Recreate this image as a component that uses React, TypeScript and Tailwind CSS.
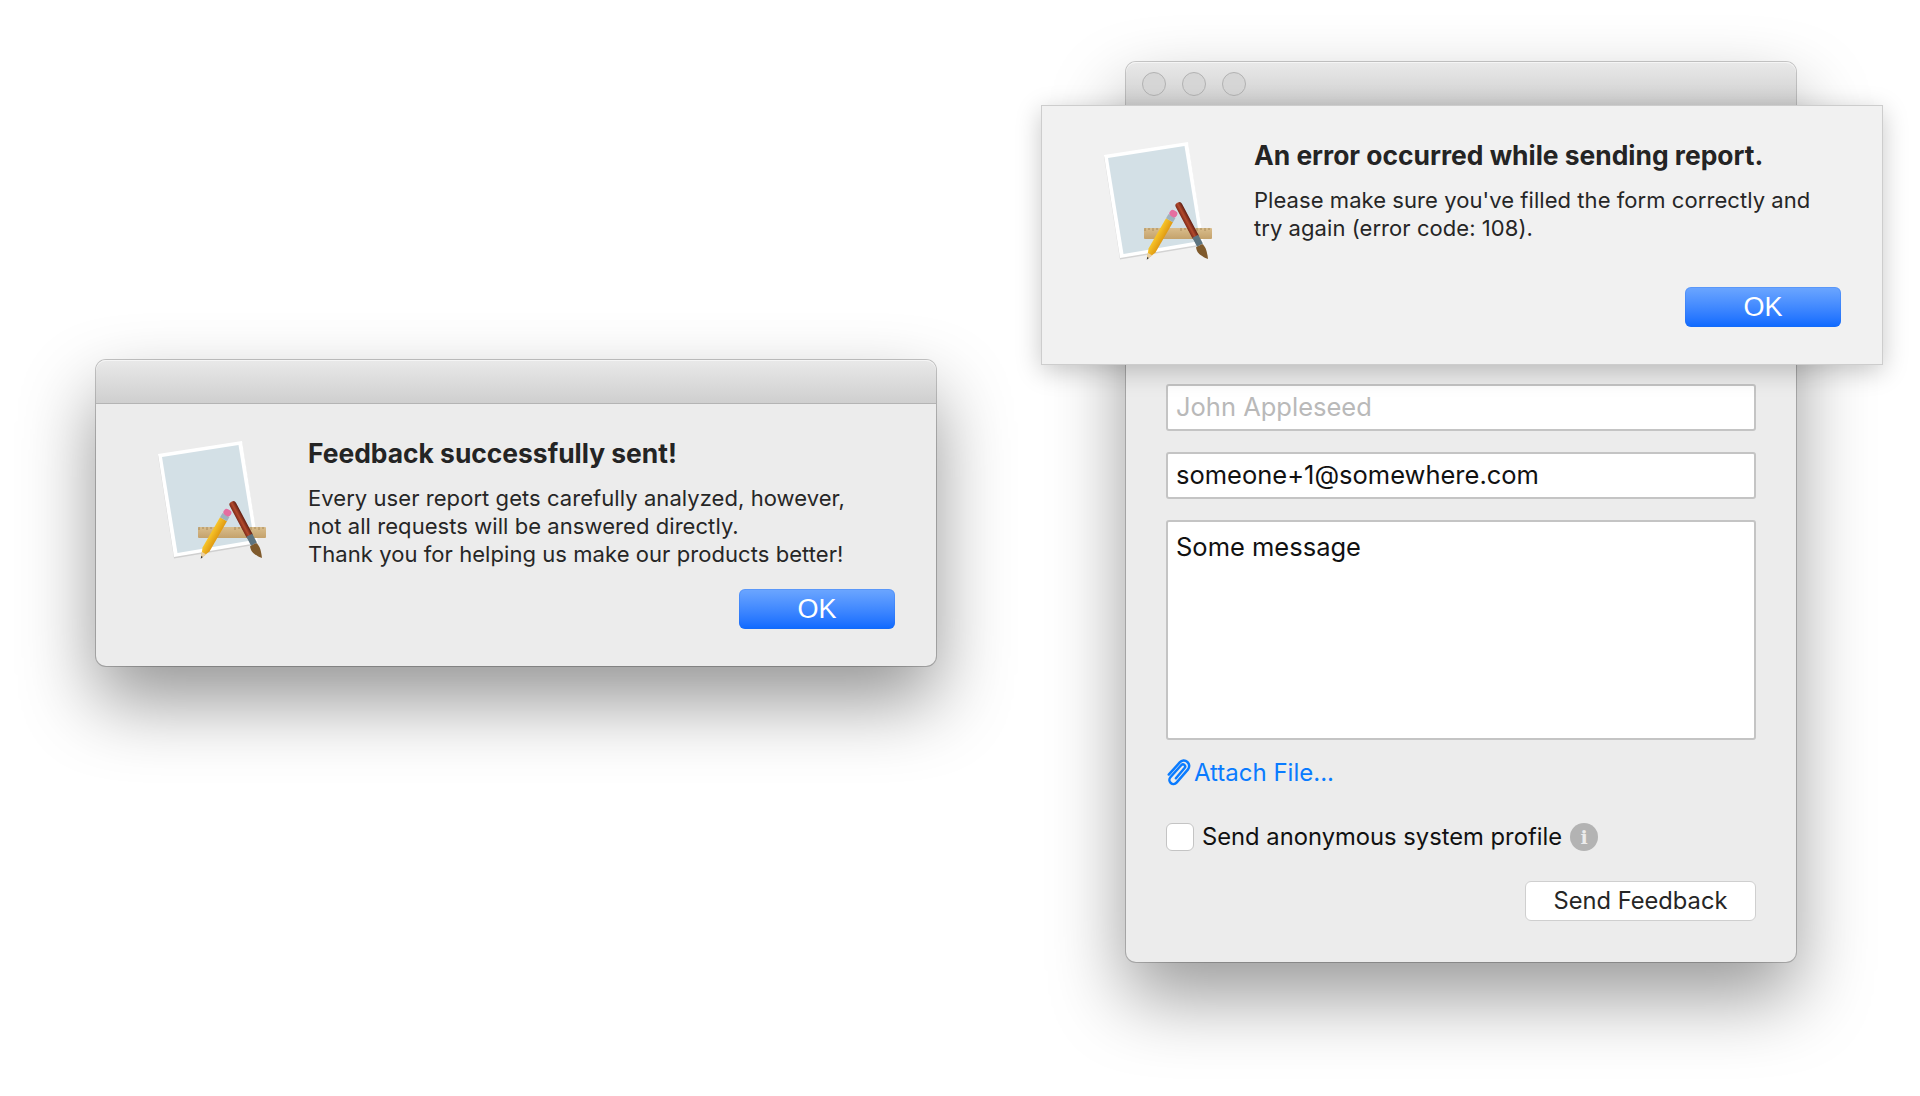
import React from "react";

const AppIcon = () => (
  <svg width="130" height="140" viewBox="0 0 130 140" className="block">
    <defs>
      <linearGradient id="okRuler" x1="0" y1="0" x2="0" y2="1">
        <stop offset="0" stopColor="#d9bd8c" />
        <stop offset="1" stopColor="#c4a26c" />
      </linearGradient>
      <linearGradient id="brushHandle" x1="0" y1="0" x2="1" y2="0">
        <stop offset="0" stopColor="#7c2a1a" />
        <stop offset="0.45" stopColor="#b34a2c" />
        <stop offset="1" stopColor="#5f1d12" />
      </linearGradient>
      <linearGradient id="pencilBody" x1="0" y1="0" x2="1" y2="0">
        <stop offset="0" stopColor="#f7c52a" />
        <stop offset="1" stopColor="#e09a12" />
      </linearGradient>
    </defs>
    <polygon points="8,24 92,11 108,113 24,127" fill="#000" opacity="0.12" transform="translate(0 1.5)" />
    <polygon points="8,24 92,11 108,113 24,127" fill="#ffffff" />
    <polygon points="12,27 88.5,15 104,110 27.5,123" fill="#d3e0e6" />
    <rect x="48" y="97" width="68" height="11" rx="1" fill="url(#okRuler)" />
    <path d="M49 97v3M53 97v2M57 97v3M61 97v2M65 97v3M69 97v2M85 97v3M89 97v2M93 97v3M97 97v2M101 97v3M105 97v2M109 97v3M113 97v2" stroke="#9c7d4e" strokeWidth="0.8" />
    <g transform="translate(-2 2.5) rotate(30 65 105)">
      <path d="M61 84h8v35l-4 10-4-10z" fill="url(#pencilBody)" />
      <path d="M62.3 123h5.4l-2.7 6z" fill="#e8cfa5" />
      <path d="M64 127h2l-1 2.5z" fill="#333" />
      <rect x="61" y="79" width="8" height="5" fill="#9fb2bd" />
      <rect x="61" y="73" width="8" height="6.5" rx="3" fill="#e56ea0" />
    </g>
    <g transform="translate(-1 -2) rotate(-28 97 100)">
      <rect x="93" y="70" width="7" height="41" rx="3" fill="url(#brushHandle)" />
      <rect x="93.2" y="108" width="6.6" height="10" fill="#5d7480" />
      <path d="M92 118c-2 5 0 9 1.5 11 .8 2 2.5 4 3.5 5 .8-1.5 3-8 3-11 0-2-.5-4-1-5z" fill="#7f5a2c" />
    </g>
  </svg>
);

const OkButton = () => (
  <button className="h-10 w-[156px] rounded-md bg-gradient-to-b from-[#6ca6ff] to-[#0a69ff] font-['Liberation_Sans',sans-serif] text-[27px] leading-10 text-white shadow-[inset_0_0_0_1px_rgba(40,110,230,0.25)]">
    OK
  </button>
);

const TitleBar = ({ children }: { children?: React.ReactNode }) => (
  <div className="flex h-11 items-center gap-4 rounded-t-[10px] border-b border-[#b4b4b4] bg-gradient-to-b from-[#e9e9e9] to-[#cfcfcf] pl-4 shadow-[inset_0_1px_0_#f5f5f5]">
    {children}
  </div>
);

const Light = () => (
  <span className="h-6 w-6 rounded-full border border-[#b2b2b2] bg-[#d6d6d6]" />
);

const Field = ({ text, muted }: { text: string; muted?: boolean }) => (
  <div
    className={`flex h-[47px] items-center rounded-[3px] border-2 border-[#c4c4c4] bg-white pl-2 text-[25.5px] ${
      muted ? "text-[#b9b9b9]" : "text-[#111111]"
    }`}
  >
    {text}
  </div>
);

const PaperClip = () => (
  <svg width="25" height="28" viewBox="0 0 24 27" fill="none" stroke="#0a7bff" strokeWidth="2.4" strokeLinecap="round" strokeLinejoin="round">
    <path d="M9.5 18.5 18 8.5a2.1 2.1 0 0 0-3.2-2.7L4.2 17.6a3.9 3.9 0 0 0 5.9 5.2L21 10.2a5.2 5.2 0 0 0-7.8-6.9L2.6 15" />
  </svg>
);

const InfoBadge = () => (
  <span className="flex h-7 w-7 items-center justify-center rounded-full bg-[#b3b3b3] font-['DejaVu_Serif',serif] text-[19px] font-bold leading-none text-[#ececec]">
    i
  </span>
);

export default function App() {
  return (
    <div className="relative h-[1096px] w-[1920px] overflow-hidden bg-white font-['Inter',sans-serif]">
      {/* success dialog */}
      <div className="absolute left-[96px] top-[360px] flex h-[306px] w-[840px] flex-col rounded-[10px] bg-[#ececec] shadow-[0_0_0_1px_rgba(0,0,0,0.22),0_35px_75px_0_rgba(0,0,0,0.42)]">
        <TitleBar />
        <div className="flex flex-1 pl-[54px]">
          <div className="w-[158px] pt-[26px]">
            <AppIcon />
          </div>
          <div className="flex-1 pr-[41px] pt-[33px]">
            <h2 className="text-[26.4px] font-bold leading-8 text-[#242424]">Feedback successfully sent!</h2>
            <p className="mt-[15px] whitespace-pre-line text-[22px] leading-7 tracking-[0.06px] text-[#262626]">
              {"Every user report gets carefully analyzed, however,\nnot all requests will be answered directly.\nThank you for helping us make our products better!"}
            </p>
            <div className="mt-[21px] flex justify-end">
              <OkButton />
            </div>
          </div>
        </div>
      </div>

      {/* feedback form window */}
      <div className="absolute left-[1126px] top-[62px] flex h-[900px] w-[670px] flex-col rounded-[10px] bg-[#ececec] shadow-[0_0_0_1px_rgba(0,0,0,0.2),0_35px_75px_0_rgba(0,0,0,0.4)]">
        <TitleBar>
          <Light />
          <Light />
          <Light />
        </TitleBar>
        <div className="flex flex-1 flex-col px-10 pt-[278px]">
          <Field text="John Appleseed" muted />
          <div className="mt-[21px]">
            <Field text="someone+1@somewhere.com" />
          </div>
          <div className="mt-[21px] h-[220px] rounded-[3px] border-2 border-[#c4c4c4] bg-white px-2 pt-[9px] text-[25.5px] leading-8 text-[#111111]">
            Some message
          </div>
          <div className="mt-[17px] flex h-8 items-center gap-[3px] text-[24px] text-[#0a7bff]">
            <PaperClip />
            <span>Attach File...</span>
          </div>
          <div className="mt-[34px] flex h-7 items-center text-[23.75px] text-[#111111]">
            <span className="h-7 w-7 rounded-md border border-[#c4c4c4] bg-white" />
            <span className="ml-2">Send anonymous system profile</span>
            <span className="ml-2">
              <InfoBadge />
            </span>
          </div>
          <div className="mt-[30px] flex justify-end">
            <button className="h-10 w-[231px] rounded-md border border-[#cfcfcf] bg-white text-[23.7px] leading-none text-[#262626]">
              Send Feedback
            </button>
          </div>
        </div>
      </div>

      {/* error sheet */}
      <div className="absolute left-[1041px] top-[105px] flex h-[260px] w-[842px] border border-[#cdcdcd] bg-[#f1f1f1] pl-[54px] shadow-[0_6px_24px_rgba(0,0,0,0.22)]">
        <div className="w-[158px] pt-[25px]">
          <AppIcon />
        </div>
        <div className="flex-1 pr-[41px] pt-[33px]">
          <h2 className="text-[26.4px] font-bold leading-8 text-[#242424]">An error occurred while sending report.</h2>
          <p className="mt-[15px] text-[22px] leading-7 tracking-[0.06px] text-[#262626]">
            Please make sure you've filled the form correctly and
            <br />
            try again (error code: 108).
          </p>
          <div className="mt-[45px] flex justify-end">
            <OkButton />
          </div>
        </div>
      </div>
    </div>
  );
}
